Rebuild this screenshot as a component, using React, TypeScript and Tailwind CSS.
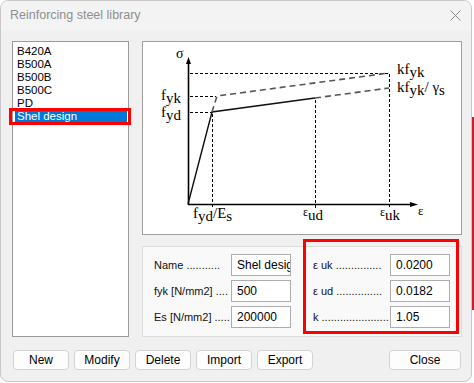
import React from "react";

const font = { fontFamily: '"Liberation Sans", Arial, sans-serif' };

const materials = ["B420A", "B500A", "B500B", "B500C", "PD", "Shel design"];

function Diagram() {
  // viewBox uses page coordinates so the chart lines up with the reference
  return (
    <svg width="318" height="192" viewBox="143 42 318 192" className="block">
      <g fontFamily='"Liberation Serif", "Times New Roman", serif' fontSize="15" fill="#000">
        {/* reference lines */}
        <g stroke="#000" strokeWidth="1" strokeDasharray="3 2" fill="none">
          <line x1="190" y1="73.5" x2="389" y2="73.5" />
          <line x1="190" y1="96.5" x2="216" y2="96.5" />
          <line x1="190" y1="112.5" x2="212" y2="112.5" />
          <line x1="212.5" y1="114" x2="212.5" y2="208" />
          <line x1="315.5" y1="100" x2="315.5" y2="208" />
          <line x1="389.5" y1="74" x2="389.5" y2="208" />
        </g>
        {/* axes */}
        <line x1="188.5" y1="62" x2="188.5" y2="205" stroke="#000" strokeWidth="1.6" />
        <line x1="188" y1="204.5" x2="412" y2="204.5" stroke="#000" strokeWidth="1.6" />
        <path d="M188.5 57 L186 64 L191 64 Z" fill="#000" />
        <path d="M418 204.5 L410 202 L410 207 Z" fill="#000" />
        {/* stress-strain curve */}
        <polyline points="188,204 212,112 315,98" fill="none" stroke="#111" strokeWidth="1.4" />
        <line x1="315" y1="98" x2="389" y2="88" stroke="#555" strokeWidth="1.6" strokeDasharray="6 4" />
        <polyline points="212,112 217,96 389,73" fill="none" stroke="#555" strokeWidth="1.6" strokeDasharray="6 4" />
        {/* labels */}
        <text x="176" y="58" fontSize="14">σ</text>
        <text x="418" y="215" fontSize="13">ε</text>
        <text x="161" y="100">f<tspan dy="3">yk</tspan></text>
        <text x="161" y="117">f<tspan dy="3">yd</tspan></text>
        <text x="397" y="74">kf<tspan dy="3">yk</tspan></text>
        <text x="397" y="92">kf<tspan dy="3">yk</tspan><tspan dy="-3">/ γ</tspan><tspan dy="3">s</tspan></text>
        <text x="193" y="218">f<tspan dy="3">yd</tspan><tspan dy="-3">/E</tspan><tspan dy="3">s</tspan></text>
        <text x="303" y="216" fontSize="12">ε<tspan dy="4" fontSize="15">ud</tspan></text>
        <text x="380" y="216" fontSize="12">ε<tspan dy="4" fontSize="15">uk</tspan></text>
      </g>
    </svg>
  );
}

function Field({ label, value }: { label: string; value: string }) {
  return (
    <div className="flex h-[22px] items-center">
      <span className="w-[77px] whitespace-nowrap text-[11px] text-[#111]">{label}</span>
      <div className="flex h-[22px] w-[60px] items-center overflow-hidden whitespace-nowrap border border-[#adadad] bg-white pl-[5px] text-[12px] text-black">
        {value}
      </div>
    </div>
  );
}

function Btn({ children, wide }: { children: React.ReactNode; wide?: boolean }) {
  return (
    <button className={`flex h-[20px] ${wide ? "w-[72px]" : "w-[56px]"} items-center justify-center rounded-[4px] border border-[#d3d3d3] bg-[#fdfdfd] text-[12px] text-black`}>
      {children}
    </button>
  );
}

export default function App() {
  return (
    <div className="flex h-[383px] w-[474px] bg-white" style={font}>
      <div className="flex h-[382px] w-[472px] flex-col overflow-hidden rounded-lg border border-[#c9c9c9] bg-[#f0f0f0]">
        <div className="flex h-[29px] items-center justify-between bg-[#f3f3f3] pl-[9px] pr-[10px]">
          <span className="text-[12.5px] text-[#8f8f8f]">Reinforcing steel library</span>
          <svg width="11" height="11" viewBox="0 0 11 11">
            <path d="M0.5 0.5 L10.5 10.5 M10.5 0.5 L0.5 10.5" stroke="#8a8a8a" strokeWidth="1" />
          </svg>
        </div>

        <div className="flex gap-[13px] pl-[11px] pt-[11px]">
          {/* material list */}
          <div className="relative h-[296px] w-[117px] border border-[#9a9a9a] bg-white pl-[2px] pt-[3px] text-[11.5px] leading-[13px]">
            {materials.map((m, i) => (
              <div
                key={m}
                className={`h-[13px] w-[112px] pl-[2px] ${i === materials.length - 1 ? "bg-[#0078d7] text-white" : "text-[#000]"}`}
              >
                {m}
              </div>
            ))}
            <div className="absolute left-[-4px] top-[66px] h-[17px] w-[122px] border-[3px] border-[#ff0000]" />
          </div>

          {/* chart + parameters */}
          <div className="flex w-[320px] flex-col gap-[11px]">
            <div className="h-[194px] border border-[#a0a0a0] bg-white">
              <Diagram />
            </div>
            <div className="relative flex h-[91px] gap-[22px] border border-[#dcdcdc] bg-[#f9f9f9] pl-[11px] pt-[7px]">
              <div className="flex flex-col gap-[4px]">
                <Field label="Name ..........." value="Shel design" />
                <Field label="fyk [N/mm2] ...." value="500" />
                <Field label="Es [N/mm2] ....." value="200000" />
              </div>
              <div className="flex flex-col gap-[4px]">
                <Field label="ε uk ..............." value="0.0200" />
                <Field label="ε ud ..............." value="0.0182" />
                <Field label="k ......................" value="1.05" />
              </div>
              <div className="absolute left-[160px] top-[-8px] h-[95px] w-[156px] border-[3px] border-[#ff0000]" />
            </div>
          </div>
        </div>

        <div className="flex pl-[12px] pr-[10px] pt-[13px]">
          <div className="flex gap-[5px]">
            <Btn>New</Btn>
            <Btn>Modify</Btn>
            <Btn>Delete</Btn>
            <Btn>Import</Btn>
            <Btn>Export</Btn>
          </div>
          <div className="ml-auto">
            <Btn wide>Close</Btn>
          </div>
        </div>
      </div>
      <div className="mt-[117px] h-[193px] w-[2px] bg-[#c8202a]" />
    </div>
  );
}
